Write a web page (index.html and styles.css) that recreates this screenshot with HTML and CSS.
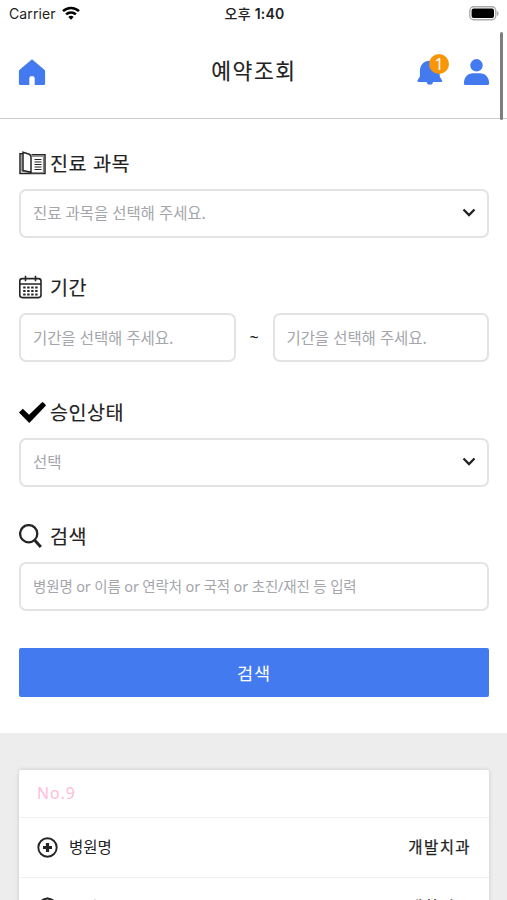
FILE: index.html
```html
<!DOCTYPE html>
<html lang="ko">
<head>
<meta charset="utf-8">
<title>예약조회</title>
<link rel="stylesheet" href="styles.css">
</head>
<body>
<div class="screen">
  <div class="statusbar">
    <div class="carrier"><span>Carrier</span>
      <svg width="18" height="14" viewBox="0 0 18 14"><g fill="none" stroke="#000" stroke-width="2.5"><path d="M1 5.1a11.6 11.6 0 0 1 16 0"/><path d="M4.1 8.4a7 7 0 0 1 9.800 0"/></g><path d="M9 13.7 6.300 11a3.900 3.900 0 0 1 5.400 0z"/></svg>
    </div>
    <div class="clock">오후 <b>1:40</b></div>
    <svg class="battery" width="31" height="15" viewBox="0 0 31 15"><rect x=".8" y=".8" width="26" height="13" rx="4" fill="#fff" stroke="#aaa" stroke-width="1.4"/><rect x="2.6" y="2.5" width="22.4" height="9.6" rx="2" fill="#000"/><path d="M28.2 5v5c1.7-.7 1.7-4.3 0-5z" fill="#999"/></svg>
  </div>
  <header class="header">
    <svg class="home" width="28" height="27" viewBox="0 0 28 27"><path fill="#447af0" d="M14 .2 1.6 10.7q-.7.6-.7 1.5v12.3q0 1.5 1.5 1.5h8.900v-6.300a2.700 2.700 0 0 1 5.400 0V26h8.900q1.500 0 1.500-1.500V12.200q0-.9-.7-1.500z"/></svg>
    <h1>예약조회</h1>
    <div class="actions">
      <div class="bell">
        <svg width="26" height="27" viewBox="0 0 26 27"><path fill="#447af0" d="M12.800 .8C6.500.8 2.900 5.500 2.900 11v5.500L.6 20.200q-.8 1.800 1.100 1.800h7.900q.4 2.800 3.200 2.800t3.200-2.800h7.900q1.900 0 1.100-1.800L22.700 16.500V11C22.700 5.500 19 .8 12.800.8z"/></svg>
        <span class="badge">1</span>
      </div>
      <svg width="27" height="27" viewBox="0 0 27 27" fill="#447af0"><circle cx="13.500" cy="6.300" r="6.200"/><path d="M.9 24.500C.9 18 4.800 14.200 10 14.200h7c5.200 0 9.100 3.800 9.100 10.300q0 1.500-1.500 1.500H2.400Q.9 26 .9 24.500z"/></svg>
    </div>
  </header>
  <main class="form">
    <section class="group">
      <h2><svg width="27" height="24" viewBox="0 0 27 24" fill="none" stroke="#252525" stroke-width="1.500"><path d="M4 2.800H1v19.600h25V3.700H12.500"/><path d="M2.800 3v17.300l9.200 1.500h12.400V5.300H13" stroke="#777" stroke-width="1"/><path d="M4 1.200 9.500 3q2.500.8 2.500 3v15.200l-8-1.700z" fill="#fff"/><path d="M15.500 8.500h7m-7 2.500h7m-7 2.500h7m-7 2.500h7m-7 2.500h7" stroke-width="1.200"/></svg>진료 과목</h2>
      <div class="field">진료 과목을 선택해 주세요.<svg class="chevron" width="14" height="9" viewBox="0 0 14 9"><path d="m1.500 1.500 5.500 5.500 5.500-5.500"/></svg></div>
    </section>
    <section class="group">
      <h2><svg width="27" height="24" viewBox="0 0 27 24" fill="none" stroke="#252525" stroke-width="1.600"><rect x=".8" y="3.600" width="21.200" height="19" rx="2.500"/><path d="M1 9h21M6.500.8v5.400M16.500.8v5.400"/><path d="M4.200 12.500h2.400m1.600 0h2.400m1.600 0h2.400m1.600 0h2.400m-14.400 3.500h2.400m1.600 0h2.400m1.600 0h2.400m1.600 0h2.400m-14.400 3.500h2.400m1.600 0h2.400m1.600 0h2.400m1.600 0h2.400" stroke-width="1.800"/></svg>기간</h2>
      <div class="range"><div class="field">기간을 선택해 주세요.</div><span class="tilde">~</span><div class="field">기간을 선택해 주세요.</div></div>
    </section>
    <section class="group">
      <h2><svg width="27" height="24" viewBox="0 0 27 24"><path d="m0 12.500 3.800-3.800 6.300 6L23.300 2q2.300.5 3.700 3.600L10.300 23z"/></svg>승인상태</h2>
      <div class="field">선택<svg class="chevron" width="14" height="9" viewBox="0 0 14 9"><path d="m1.500 1.500 5.500 5.500 5.500-5.500"/></svg></div>
    </section>
    <section class="group">
      <h2><svg width="27" height="24" viewBox="0 0 27 24" fill="none" stroke="#252525"><circle cx="9.700" cy="9.700" r="8.600" stroke-width="2.300"/><path d="m15.500 16 6.300 7" stroke-width="3"/></svg>검색</h2>
      <div class="field search">병원명 or 이름 or 연락처 or 국적 or 초진/재진 등 입력</div>
    </section>
    <button class="submit">검색</button>
  </main>
  <div class="results">
    <article class="card">
      <div class="number">No.9</div>
      <div class="row"><svg width="21" height="21" viewBox="0 0 21 21"><circle cx="10.500" cy="10.500" r="9.200" fill="none" stroke="#252525" stroke-width="1.900"/><path d="M10.500 6v9M6 10.500h9" stroke="#252525" stroke-width="3.200"/></svg><span>병원명</span><strong>개발치과</strong></div>
      <div class="row"><svg width="21" height="21" viewBox="0 0 21 21" fill="none" stroke="#252525" stroke-width="1.700"><circle cx="10.500" cy="10.500" r="9.200"/><ellipse cx="10.500" cy="10.500" rx="4.500" ry="9.200"/><path d="M1.300 10.500h18.400M3 5.500h15M3 15.500h15"/></svg><span>국적</span><strong>대한민국</strong></div>
    </article>
  </div>
  <div class="scrollbar"></div>
</div>
</body>
</html>
```
FILE: styles.css
```css
* { box-sizing: border-box; }
body { margin: 0; background: #fff; color: #222; font-family: "Noto Sans CJK KR", sans-serif; }
.screen { position: relative; height: 900px; overflow: hidden; }
svg { display: block; flex: none; }
.statusbar { height: 28px; padding: 0 7px 0 9px; display: grid; grid-template-columns: 1fr auto 1fr; align-items: center; font-family: Inter, "Noto Sans CJK KR", sans-serif; font-size: 14px; }
.carrier { display: flex; align-items: center; gap: 6px; letter-spacing: .1px; }
.carrier span { margin-top: -1px; }
.carrier svg { margin-top: -3px; }
.clock { margin-top: -2px; font-weight: 500; font-size: 14px; letter-spacing: .2px; }
.clock b { font-weight: 600; }
.battery { justify-self: end; margin-top: -2px; }
.header { height: 91px; padding: 0 17px 0 18px; display: grid; grid-template-columns: 1fr auto 1fr; align-items: center; border-bottom: 1px solid #cacaca; }
.home { margin-top: -1px; }
.header h1 { margin: -7px 0 0; font-size: 21.500px; font-weight: 400; -webkit-text-stroke: .15px; letter-spacing: 1.600px; line-height: 30px; }
.actions { display: flex; justify-content: flex-end; gap: 20px; }
.actions > svg { margin-top: -1px; }
.bell { position: relative; }
.badge { position: absolute; left: 12px; top: -6px; width: 20px; height: 20px; border-radius: 50%; background: #f79608; color: #fff; font: 400 16px/20px "Noto Sans", sans-serif; text-align: center; }
.form { padding: 30px 18px 36px 19px; height: 614px; }
.group { height: 124.600px; }
.group h2 { margin: 0; height: 39.500px; padding-bottom: 12.500px; display: flex; align-items: center; gap: 4px; font-size: 19.600px; font-weight: 400; -webkit-text-stroke: .15px; letter-spacing: .5px; line-height: 26px; }
.field { position: relative; height: 49px; padding: 0 12px 1.500px; display: flex; align-items: center; flex: 1; border: 2px solid #e3e3e3; border-radius: 7px; color: #a4a6ac; font-size: 15.500px; letter-spacing: -.1px; line-height: 24px; white-space: nowrap; }
.search { font-size: 14.500px; font-family: "Noto Sans", "Noto Sans CJK KR", sans-serif; letter-spacing: -.15px; }
.chevron { margin-left: auto; margin-right: -1px; fill: none; stroke: #222; stroke-width: 2.300; }
.range { display: flex; align-items: center; }
.tilde { width: 37px; margin-top: -1px; text-align: center; font: 16px "Noto Sans", sans-serif; }
.submit { display: block; width: 100%; height: 49px; margin-top: 1px; padding: 0; border: 0; border-radius: 2px; background: #447af0; color: #fff; font: 400 17.500px/49px "Noto Sans CJK KR", sans-serif; letter-spacing: 1px; }
.results { height: 167px; overflow: hidden; padding: 37px 18px 0 19px; background: #ededed; }
.card { background: #fff; border-radius: 2px; box-shadow: 0 0 4px rgba(0,0,0,.16); }
.number { height: 47px; padding: 0 18px; line-height: 46px; color: #ffbcd8; font-family: "Noto Sans", sans-serif; font-size: 15.800px; letter-spacing: 1px; }
.row { height: 60px; padding: 0 18px; border-top: 1px solid #f0f0f0; display: flex; align-items: center; font-size: 15.500px; }
.row span { margin: -3px 0 0 11px; }
.row strong { margin: -3px 0 0 auto; font-weight: 400; -webkit-text-stroke: .25px; letter-spacing: 1.400px; }
.scrollbar { position: absolute; right: 4px; top: 32px; width: 3px; height: 88px; border-radius: 2px; background: #7e7e7e; }
```
